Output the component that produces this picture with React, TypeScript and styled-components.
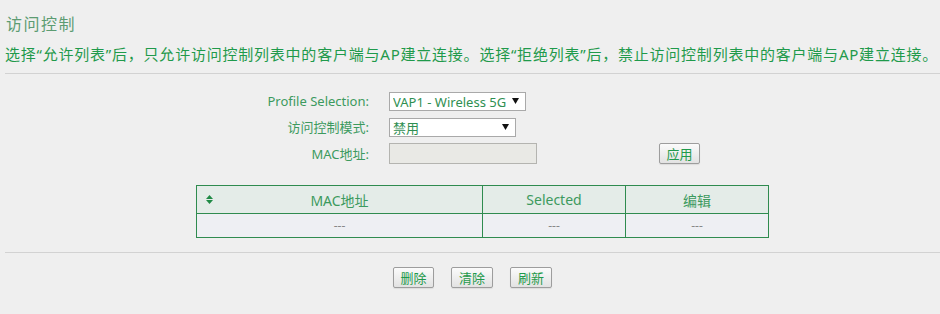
import React from "react";
import styled, { createGlobalStyle } from "styled-components";

const GlobalStyle = createGlobalStyle`
	body {
		margin: 0;
		background: #efefef;
		font-family: "Noto Sans", "Noto Sans CJK SC", sans-serif;
	}
`;

const PageWrapper = styled.div`
	width: 940px;
	height: 314px;
	overflow: hidden;
	display: flex;
	flex-direction: column;
`;

const PageTitle = styled.h1`
	margin: 13px 0 0 6px;
	font-size: 16px;
	line-height: 22px;
	font-weight: 400;
	color: #5c9c72;
	letter-spacing: 1.5px;
`;

const Description = styled.p`
	margin: 8px 0 0 5px;
	font-size: 15px;
	line-height: 22px;
	color: #1f9a4b;
	white-space: nowrap;
	letter-spacing: 0.78px;
`;

const Divider = styled.div<{ $top: number }>`
	margin: ${(p) => p.$top}px 0 0 5px;
	border-top: 1px solid #d2d2d2;
`;

const FormGrid = styled.div`
	display: grid;
	grid-template-columns: 369px 250px 50px;
	column-gap: 20px;
	row-gap: 6px;
	margin-top: 17px;
	align-items: center;
`;

const Label = styled.label`
	text-align: right;
	font-size: 13px;
	color: #3c9a5e;
	line-height: 20px;
`;

const Select = styled.select<{ $width: number }>`
	appearance: none;
	width: ${(p) => p.$width}px;
	height: 19px;
	padding: 0 0 0 3px;
	border: 1px solid #a9a9a9;
	border-radius: 0;
	background: #fff
		url("data:image/svg+xml;utf8,<svg xmlns='http://www.w3.org/2000/svg' width='7' height='6'><path d='M0 0h7L3.5 6z' fill='%23111'/></svg>")
		no-repeat right 6px center;
	font-family: "Noto Sans", "Noto Sans CJK SC", sans-serif;
	font-size: 13px;
	color: #2f8f52;
	justify-self: start;
`;

const TextInput = styled.input`
	width: 148px;
	height: 21px;
	box-sizing: border-box;
	border: 1px solid #b4b4b0;
	background: #e9e9e5;
	justify-self: start;
`;

const Button = styled.button<{ $width?: number }>`
	width: ${(p) => p.$width ?? 41}px;
	height: 21px;
	padding: 0;
	border: 1px solid #9d9d9d;
	border-radius: 2px;
	background: linear-gradient(#fbfbfb, #e2e2e2);
	font-family: "Noto Sans CJK SC", sans-serif;
	font-size: 13px;
	line-height: 18px;
	color: #1f9a4b;
	box-shadow: 0 1px 1px rgba(0, 0, 0, 0.08);
`;

const Table = styled.table`
	margin: 21px 0 0 196px;
	width: 573px;
	border-collapse: collapse;
	font-size: 14px;
	color: #3c9a5e;
	th,
	td {
		border: 1px solid #2f8b4f;
		text-align: center;
		font-weight: 400;
		padding: 0;
	}
	th {
		height: 27px;
		background: #e4ece8;
	}
	td {
		height: 23px;
		background: #eeeff3;
		color: #888;
		font-size: 12px;
	}
`;

const SortCell = styled.th`
	position: relative;
`;

const SortIcon = styled.svg`
	position: absolute;
	left: 9px;
	top: 9px;
`;

const ButtonRow = styled.div`
	display: flex;
	justify-content: center;
	gap: 17px;
	margin-top: 14px;
	padding-left: 5px;
`;

const App = () => {
	return (
		<PageWrapper>
			<GlobalStyle />
			<PageTitle>访问控制</PageTitle>
			<Description>
				选择“允许列表”后，只允许访问控制列表中的客户端与AP建立连接。选择“拒绝列表”后，禁止访问控制列表中的客户端与AP建立连接。
			</Description>
			<Divider $top={8} />
			<FormGrid>
				<Label>Profile Selection:</Label>
				<Select $width={137} defaultValue="vap1">
					<option value="vap1">VAP1 - Wireless 5G</option>
				</Select>
				<span />
				<Label>访问控制模式:</Label>
				<Select $width={127} defaultValue="off">
					<option value="off">禁用</option>
				</Select>
				<span />
				<Label>MAC地址:</Label>
				<TextInput disabled />
				<Button>应用</Button>
			</FormGrid>
			<Table>
				<thead>
					<tr>
						<SortCell style={{ width: 285 }}>
							<SortIcon width="7" height="9" viewBox="0 0 7 9">
								<path d="M3.5 0L7 4H0z M0 5h7L3.5 9z" fill="#1f8a45" />
							</SortIcon>
							MAC地址
						</SortCell>
						<th style={{ width: 142 }}>Selected</th>
						<th>编辑</th>
					</tr>
				</thead>
				<tbody>
					<tr>
						<td>---</td>
						<td>---</td>
						<td>---</td>
					</tr>
				</tbody>
			</Table>
			<Divider $top={14} />
			<ButtonRow>
				<Button>删除</Button>
				<Button $width={42}>清除</Button>
				<Button $width={42}>刷新</Button>
			</ButtonRow>
		</PageWrapper>
	);
};

export default App;
